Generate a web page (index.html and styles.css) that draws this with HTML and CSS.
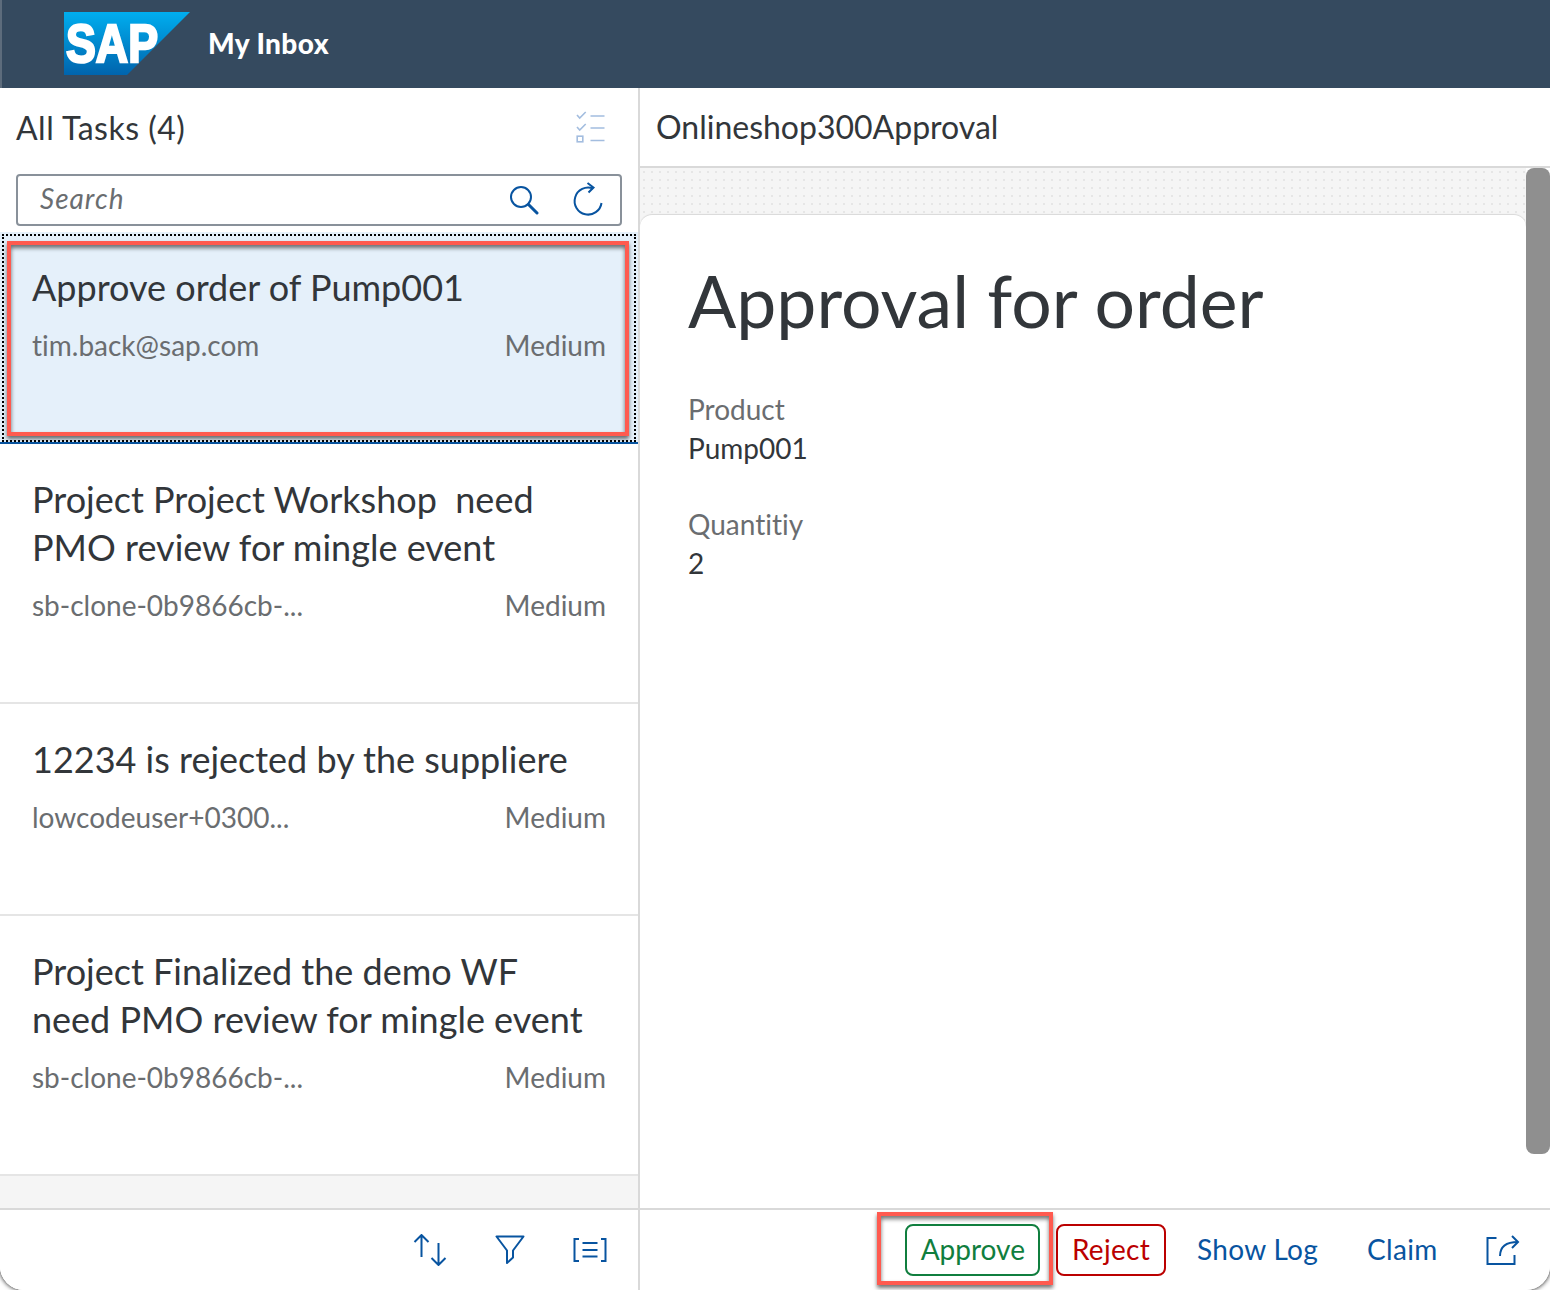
FILE: index.html
```html
<!DOCTYPE html>
<html lang="en">

<head>
    <meta charset="UTF-8">
    <title>My Inbox</title>
    <link rel="stylesheet" href="styles.css">
</head>

<body>
    <div class="app">
        <header class="shell">
            <svg class="logo" width="126" height="63" viewBox="0 0 126 63">
                <defs>
                    <linearGradient id="sapblue" x1="0" y1="0" x2="0" y2="1">
                        <stop offset="0" stop-color="#00aeef"></stop>
                        <stop offset="1" stop-color="#0064ad"></stop>
                    </linearGradient>
                </defs>
                <polygon points="0,0 126,0 63,63 0,63" fill="url(#sapblue)"></polygon>
                <text x="2" y="50" class="logo-text" textLength="92" lengthAdjust="spacingAndGlyphs">SAP</text>
            </svg>
            <span class="shell-title">My Inbox</span>
        </header>

        <div class="split">
            <!-- master list -->
            <section class="master">
                <div class="master-head">
                    <h1 class="head-title head-title-wide">All Tasks (4)</h1>
                    <svg class="icon" width="30" height="34" viewBox="0 0 30 34" fill="none" stroke="#a3bddf" stroke-width="1.6">
                        <path d="M1 4l2.700 3 6-6M1 16l2.700 3 6-6"></path>
                        <rect x="1.200" y="25.200" width="5.600" height="5.600"></rect>
                        <path d="M14.500 5h14M14.500 17h14M14.500 29.500h14"></path>
                    </svg>
                </div>
                <div class="search">
                    <span class="search-hint">Search</span>
                    <svg class="icon" width="30" height="30" viewBox="0 0 30 30" fill="none" stroke="#0854a0" stroke-width="2">
                        <circle cx="12" cy="12" r="10"></circle>
                        <path d="M19.500 19.500l8.500 8.500" stroke-width="3" stroke-linecap="round"></path>
                    </svg>
                    <svg class="icon" width="32" height="36" viewBox="0 0 32 36" fill="none" stroke="#0854a0" stroke-width="2">
                        <path d="M21 6.500A13.500 13.500 0 1 0 29.500 21"></path>
                        <path d="M15.500 1l6 4.500-5 5"></path>
                    </svg>
                </div>
                <ul class="tasks">
                    <li class="task task-selected">
                        <div class="task-title">Approve order of Pump001</div>
                        <div class="task-meta"><span>tim.back@sap.com</span><span>Medium</span></div>
                    </li>
                    <li class="task">
                        <div class="task-title">Project Project Workshop&nbsp; need<br>PMO review for mingle event</div>
                        <div class="task-meta"><span>sb-clone-0b9866cb-...</span><span>Medium</span></div>
                    </li>
                    <li class="task">
                        <div class="task-title">12234 is rejected by the suppliere</div>
                        <div class="task-meta"><span>lowcodeuser+0300...</span><span>Medium</span></div>
                    </li>
                    <li class="task">
                        <div class="task-title">Project Finalized the demo WF<br>need PMO review for mingle event</div>
                        <div class="task-meta"><span>sb-clone-0b9866cb-...</span><span>Medium</span></div>
                    </li>
                </ul>
                <div class="tasks-rest"></div>
                <footer class="bar bar-icons">
                    <button class="icon-btn">
                        <svg width="34" height="32" viewBox="0 0 34 32" fill="none" stroke="#0854a0" stroke-width="2">
                            <path d="M8.500 1v22M1.500 8l7-7 7 7"></path>
                            <path d="M25.500 9v22M18.500 24l7 7 7-7"></path>
                        </svg>
                    </button>
                    <button class="icon-btn">
                        <svg width="30" height="30" viewBox="0 0 30 30" fill="none" stroke="#0854a0" stroke-width="2" stroke-linejoin="round">
                            <path d="M1.500 1.500h27L18 15.500v7l-6 5.500V15.500z"></path>
                        </svg>
                    </button>
                    <button class="icon-btn">
                        <svg width="34" height="26" viewBox="0 0 34 26" fill="none" stroke="#0854a0" stroke-width="2">
                            <path d="M6 2H1.500v22H6M28 2h4.500v22H28"></path>
                            <path d="M9.500 6h15M9.500 13h15M9.500 19.500h15"></path>
                        </svg>
                    </button>
                </footer>
            </section>

            <!-- detail -->
            <section class="detail">
                <div class="detail-head">
                    <h2 class="head-title">Onlineshop300Approval</h2>
                </div>
                <div class="detail-body">
                    <div class="detail-scroll">
                        <div class="card">
                            <h3 class="card-title">Approval for order</h3>
                            <div class="field-label">Product</div>
                            <div class="field-value">Pump001</div>
                            <div class="field-label">Quantitiy</div>
                            <div class="field-value">2</div>
                        </div>
                    </div>
                    <div class="scrollbar"><div class="scroll-thumb"></div></div>
                </div>
                <footer class="bar bar-actions">
                    <button class="btn btn-accept">Approve</button>
                    <button class="btn btn-reject">Reject</button>
                    <button class="btn btn-plain">Show Log</button>
                    <button class="btn btn-plain">Claim</button>
                    <button class="icon-btn icon-btn-small">
                        <svg width="34" height="30" viewBox="0 0 34 30" fill="none" stroke="#0854a0" stroke-width="2">
                            <path d="M10.500 3H1.500v26h27v-9"></path>
                            <path d="M14 21c0-9 5-14 18-14"></path>
                            <path d="M26 1l6 6-6 6"></path>
                        </svg>
                    </button>
                </footer>
            </section>
        </div>

        <!-- red highlight boxes drawn on top of the screenshot -->
        <div class="mark mark-task"></div>
        <div class="mark mark-approve"></div>
    </div>
</body>

</html>
```
FILE: styles.css
```css
* {
    margin: 0;
    padding: 0;
    box-sizing: border-box;
}

body {
    background-color: #fff;
    overflow: hidden;
    font-family: Lato, "Noto Sans", sans-serif;
    font-variant-ligatures: none;
    color: #32363a;
}

.app {
    position: relative;
    width: 1550px;
    height: 1290px;
    display: flex;
    flex-direction: column;
    background: #fff;
    border-radius: 0 0 24px 24px;
    box-shadow: 0 0 5px #000;
    overflow: hidden;
}

/* top bar */
.shell {
    height: 88px;
    flex: none;
    display: flex;
    align-items: flex-start;
    background: #354a5f;
    border-left: 2px solid #5d6c7c;
    padding: 12px 0 0 62px;
}

.logo {
    flex: none;
}

.logo-text {
    font-family: "Liberation Sans", sans-serif;
    font-weight: 700;
    font-size: 54px;
    fill: #fff;
    stroke: #fff;
    stroke-width: 2.5px;
}

.shell-title {
    margin: 14px 0 0 18px;
    font-size: 28px;
    line-height: 34px;
    font-weight: 900;
    letter-spacing: 0.4px;
    color: #fff;
}

.split {
    flex: 1;
    display: flex;
    min-height: 0;
}

.icon {
    flex: none;
}

/* left column */
.master {
    width: 640px;
    flex: none;
    display: flex;
    flex-direction: column;
    border-right: 2px solid #d9d9d9;
    background: #fff;
}

.master-head {
    height: 80px;
    flex: none;
    display: flex;
    align-items: center;
    justify-content: space-between;
    padding: 0 32px 0 16px;
    margin-bottom: 6px;
}

.head-title {
    font-size: 32px;
    line-height: 40px;
    font-weight: 400;
    color: #32363a;
}

.head-title-wide {
    letter-spacing: 0.5px;
}

.search {
    height: 52px;
    flex: none;
    display: flex;
    align-items: center;
    gap: 33px;
    margin: 0 16px;
    padding: 0 16px 0 22px;
    border: 2px solid #89919a;
    border-radius: 4px;
}

.search-hint {
    flex: 1;
    padding-bottom: 4px;
    font-size: 28px;
    font-style: italic;
    letter-spacing: 1px;
    color: #6a6d70;
}

.tasks {
    flex: none;
    margin-top: 6px;
    list-style: none;
}

.tasks-rest {
    flex: 1;
    background: #f5f5f5;
}

.task {
    padding: 31px 32px 80px;
    border-bottom: 2px solid #e5e5e5;
}

.task-selected {
    background: #e5f0fa;
    border-bottom: 2px solid #0854a0;
    outline: 2px dotted #000;
    outline-offset: -4px;
}

.task-title {
    font-size: 36px;
    line-height: 48px;
}

.task-meta {
    display: flex;
    justify-content: space-between;
    margin-top: 17px;
    font-size: 28px;
    line-height: 34px;
    color: #6a6d70;
}

/* bottom bars */
.bar {
    height: 82px;
    flex: none;
    display: flex;
    align-items: center;
    justify-content: flex-end;
    background: #fff;
    border-top: 2px solid #d9d9d9;
}

.bar-icons {
    padding-right: 8px;
}

.bar-actions {
    gap: 16px;
    padding-right: 19px;
}

button {
    font-family: inherit;
    background: none;
    border: 0;
}

.icon-btn {
    width: 80px;
    height: 52px;
    display: flex;
    align-items: center;
    justify-content: center;
}

.icon-btn-small {
    width: 56px;
    margin-left: 5px;
}

.btn {
    height: 52px;
    padding: 0 14.5px 3px;
    font-size: 28px;
    border-radius: 8px;
    border: 2px solid transparent;
}

.btn-accept {
    padding: 0 13.5px 3px;
    color: #107e3e;
    border-color: #107e3e;
}

.btn-reject {
    padding: 0 13.5px 3px;
    margin-right: -1px;
    color: #b00;
    border-color: #b00;
    letter-spacing: 0.3px;
}

.btn-plain {
    color: #0854a0;
    letter-spacing: 0.3px;
}

/* right column */
.detail {
    flex: 1;
    min-width: 0;
    display: flex;
    flex-direction: column;
}

.detail-head {
    height: 80px;
    flex: none;
    display: flex;
    align-items: center;
    padding: 0 16px;
    border-bottom: 2px solid #d9d9d9;
}

.detail-body {
    flex: 1;
    min-height: 0;
    display: flex;
}

.detail-scroll {
    flex: 1;
    min-width: 0;
    padding-top: 47px;
    background-color: #f5f5f5;
    background-image: radial-gradient(#e6e6e6 1.2px, transparent 1.500px);
    background-size: 8px 8px;
}

.card {
    height: 100%;
    padding: 43px 48px 0;
    background: #fff;
    border-radius: 12px 12px 0 0;
    box-shadow: 0 -1px 1px #d9d9d9;
}

.card-title {
    font-size: 71.5px;
    line-height: 84px;
    font-weight: 400;
    margin-bottom: 48px;
}

.field-label {
    font-size: 28px;
    line-height: 38px;
    color: #6a6d70;
}

.field-value {
    font-size: 28px;
    line-height: 40px;
    margin-bottom: 37px;
}

.scrollbar {
    width: 24px;
    flex: none;
    background: #fff;
}

.scroll-thumb {
    height: 986px;
    background: #8f8f8f;
    border-radius: 8px;
}

/* annotations */
.mark {
    position: absolute;
    border: 4px solid #ff5a4f;
    box-shadow: 0 3px 4px rgba(0, 0, 0, 0.55), inset 0 3px 4px rgba(0, 0, 0, 0.55);
}

.mark-task {
    left: 7px;
    top: 241px;
    width: 622px;
    height: 195px;
}

.mark-approve {
    left: 877px;
    top: 1212px;
    width: 176px;
    height: 73px;
}
```
